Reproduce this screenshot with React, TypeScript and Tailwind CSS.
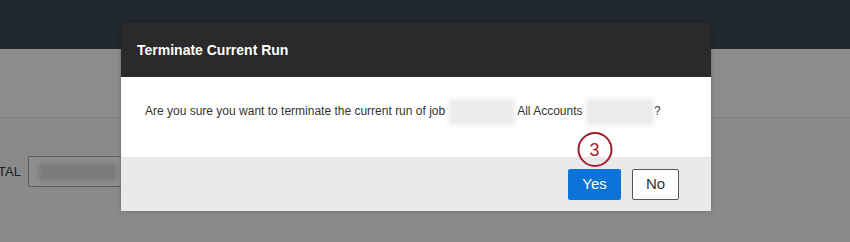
import React from "react";

function Redacted({ w }: { w: number }) {
  return (
    <span className="relative inline-block h-[14px] align-middle" style={{ width: w }}>
      <span className="absolute inset-x-0 -top-[6px] -bottom-[6px] bg-[#ececec] blur-[2px]" />
    </span>
  );
}

export default function App() {
  return (
    <div
      className="relative h-[242px] w-[850px] overflow-hidden bg-[#8a8a8a]"
      style={{ fontFamily: '"Liberation Sans", Arial, sans-serif' }}
    >
      {/* page behind the overlay */}
      <div className="h-[49px] bg-[#20272f]" />
      <div className="h-[69px] border-b border-[#7a7a7a] bg-[#8c8c8c]" />
      <div className="flex items-center pt-[38px]">
        <span className="-ml-[2px] w-[30px] text-[13px] text-[#222]">TAL</span>
        <div className="flex h-[31px] w-[140px] items-center border border-[#5e5e5e] bg-[#8e8e8e] pl-[10px]">
          <span className="h-[18px] w-[78px] bg-[#7c7c7c] blur-[2px]" />
        </div>
      </div>

      {/* dialog */}
      <div className="absolute left-[121px] top-[23px] w-[590px] shadow-[0_0_4px_rgba(0,0,0,0.25)]">
        <div className="flex h-[54px] items-center bg-[#2a2a2a] px-[16px]">
          <h2 className="text-[14px] font-bold text-white">Terminate Current Run</h2>
        </div>
        <div className="flex h-[80px] items-center bg-white px-[24px] pb-[12px] text-[12px] text-[#333]">
          <p>
            Are you sure you want to terminate the current run of job <Redacted w={66} /> All Accounts{" "}
            <Redacted w={68} />?
          </p>
        </div>
        <div className="flex h-[54px] items-start justify-end gap-[11px] bg-[#e9e9eb] pr-[32px] pt-[12px]">
          <div className="relative">
            <button className="h-[31px] w-[53px] rounded-[2px] bg-[#0b72d8] text-[15px] text-white">
              Yes
            </button>
            <div className="absolute left-1/2 top-[-37px] flex h-[35px] w-[35px] -translate-x-1/2 items-center justify-center rounded-full border-[2.5px] border-[#a51d2d] text-[18px] leading-none text-[#a51d2d]">
              3
            </div>
          </div>
          <button className="h-[31px] w-[47px] rounded-[2px] border border-[#555] bg-white text-[15px] text-[#333]">
            No
          </button>
        </div>
      </div>
    </div>
  );
}
